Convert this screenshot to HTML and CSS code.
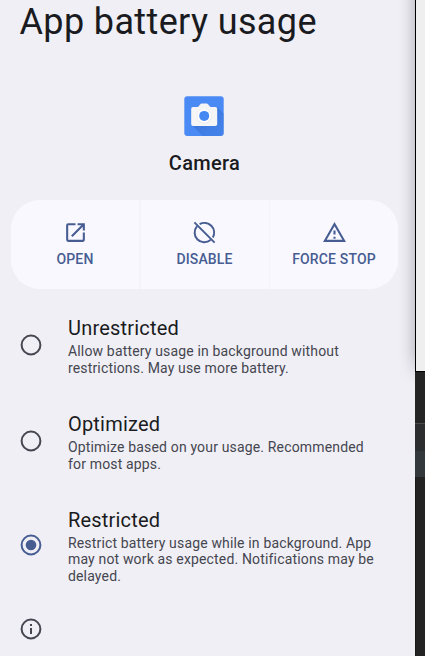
FILE: index.html
```html
<!DOCTYPE html>
<html lang="en">
<head>
<meta charset="utf-8">
<title>App battery usage</title>
<link rel="stylesheet" href="styles.css">
</head>
<body>
<main class="screen">
  <h1 class="title">App battery usage</h1>
  <section class="app">
    <svg class="app-icon" viewBox="0 0 40 40">
      <defs><linearGradient id="shade" x1="0" y1="0" x2="1" y2="1"><stop offset="0" stop-color="#2859b5" stop-opacity=".55"/><stop offset="1" stop-color="#3976db" stop-opacity=".35"/></linearGradient></defs>
      <rect x=".3" y=".3" width="39.4" height="39.6" rx="3" fill="#4a8af4"/>
      <path d="M8 29 18.5 39.9H36.7a3 3 0 0 0 3-3V17.5L33 11Z" fill="url(#shade)"/>
      <path d="M9 11h5l2.3-2.8q.5-.7 1.4-.7h5q.9 0 1.4.7L26.4 11h5q1.8 0 1.8 1.8v15.4q0 1.8-1.8 1.8H9q-1.8 0-1.8-1.8V12.8Q7.2 11 9 11Z" fill="#f5f5f5"/>
      <circle cx="20.2" cy="20.2" r="7.3" fill="#dedfe3"/>
      <circle cx="20.2" cy="19.9" r="7" fill="#fff"/>
      <circle cx="20.2" cy="19.9" r="5" fill="#4688f1"/>
    </svg>
    <h2 class="app-name">Camera</h2>
  </section>
  <nav class="actions">
    <div class="action">
      <svg class="action-icon" viewBox="0 0 24 24"><path d="M19 19H5V5h7V3H5a2 2 0 0 0-2 2v14a2 2 0 0 0 2 2h14c1.1 0 2-.9 2-2v-7h-2v7ZM14 3v2h3.590l-9.830 9.830 1.410 1.410L19 6.410V10h2V3h-7Z"/></svg>
      <span class="action-label">OPEN</span>
    </div>
    <div class="action">
      <svg class="action-icon" viewBox="0 0 24 24"><path fill="none" stroke="currentColor" stroke-width="1.900" d="M7.300 4A9.300 9.300 0 0 1 20 16.700M17.800 19.300A9.300 9.300 0 0 1 4.700 6.200M2.300 2.300 21.700 21.700"/></svg>
      <span class="action-label">DISABLE</span>
    </div>
    <div class="action">
      <svg class="action-icon" viewBox="0 0 24 24"><path d="M12 5.990 19.530 19H4.470L12 5.990M12 2 1 21h22L12 2Zm1 14h-2v2h2v-2Zm0-6h-2v4h2v-4Z"/></svg>
      <span class="action-label">FORCE STOP</span>
    </div>
  </nav>
  <section class="options">
    <div class="option">
      <svg class="mark" viewBox="0 0 22 22"><circle cx="11" cy="11" r="9.400"/></svg>
      <div><h3 class="name">Unrestricted</h3><p class="desc">Allow battery usage in background without<br>restrictions. May use more battery.</p></div>
    </div>
    <div class="option">
      <svg class="mark" viewBox="0 0 22 22"><circle cx="11" cy="11" r="9.400"/></svg>
      <div><h3 class="name">Optimized</h3><p class="desc">Optimize based on your usage. Recommended<br>for most apps.</p></div>
    </div>
    <div class="option">
      <svg class="mark selected" viewBox="0 0 22 22"><circle cx="11" cy="11" r="9.400"/><circle class="dot" cx="11" cy="11" r="5.300"/></svg>
      <div><h3 class="name">Restricted</h3><p class="desc">Restrict battery usage while in background. App<br>may not work as expected. Notifications may be<br>delayed.</p></div>
    </div>
  </section>
  <svg class="mark info" viewBox="0 0 22 22"><circle cx="11" cy="11" r="9.400"/><path d="M11 10v6M11 6v2"/></svg>
</main>
<aside class="behind">
  <div class="window"></div>
  <div class="pane"></div>
  <div class="toolbar"></div>
  <div class="row"></div>
  <div class="rest"></div>
</aside>
<div class="shadow"></div>
</body>
</html>
```
FILE: styles.css
```css
* { box-sizing: border-box; }
body {
  margin: 0;
  width: 425px;
  height: 656px;
  display: flex;
  position: relative;
  overflow: hidden;
  background: #f0eff6;
  font-family: Roboto, sans-serif;
  color: #1a1b20;
}
h1, h2, h3, p { margin: 0; font-weight: 400; white-space: nowrap; }
.screen { width: 415px; height: 656px; overflow: hidden; }
.title {
  height: 96px;
  padding-left: 19.5px;
  font-size: 36px;
  line-height: 44px;
  letter-spacing: 0.37px;
}
.app { width: 409px; display: flex; flex-direction: column; align-items: center; }
.app-icon { width: 40px; height: 40px; display: block; margin-right: 1px; }
.app-name { margin-top: 14px; font-size: 20px; line-height: 26px; font-weight: 500; letter-spacing: 0.3px; }
.actions {
  width: 387px;
  height: 89px;
  margin: 24px 0 0 11px;
  display: grid;
  grid-template-columns: 128px 128px 1fr;
  column-gap: 1.5px;
  border-radius: 29px;
  overflow: hidden;
  background: #f4f3fa;
}
.action {
  display: flex;
  flex-direction: column;
  align-items: center;
  padding-top: 20px;
  background: #f9f8ff;
  color: #475d92;
}
.action-icon { width: 25px; height: 25px; fill: currentColor; flex: none; }
.action-label { margin-top: 5px; font-size: 14px; line-height: 18px; font-weight: 500; letter-spacing: 0.15px; white-space: nowrap; }
.options { padding: 26px 0 0 20.3px; }
.option { display: flex; align-items: center; gap: 25.7px; margin-bottom: 34.4px; }
.mark { width: 22px; height: 22px; flex: none; display: block; fill: none; stroke: #45464f; stroke-width: 2; }
.option .mark { margin-bottom: 2px; }
.selected { stroke: #475d92; }
.dot { fill: #475d92; stroke: none; }
.name { font-size: 20px; line-height: 26px; letter-spacing: 0.2px; }
.desc { padding-top: 2px; font-size: 14px; line-height: 16.7px; letter-spacing: 0.16px; color: #45464f; }
.info { margin: -1px 0 0 20.3px; }
.behind { width: 10px; height: 656px; display: flex; flex-direction: column; background: #232323; }
.window { height: 372px; border: solid #000; border-width: 0 0 1px 1px; background: #efefef; }
.pane { height: 51px; background: #242424; }
.toolbar { height: 28px; border-top: 1px solid #4b4b4b; background: #2b2d2f; }
.row { height: 26px; background: #33383c; }
.rest { flex: 1; border-left: 1px solid #191919; }
.shadow {
  position: absolute;
  left: 399px;
  top: 0;
  width: 16px;
  height: 384px;
  background: linear-gradient(90deg, rgba(60,60,70,0), rgba(60,60,70,.05) 45%, rgba(60,60,70,.2));
  mask-image: linear-gradient(#000 350px, transparent 384px);
}
```
